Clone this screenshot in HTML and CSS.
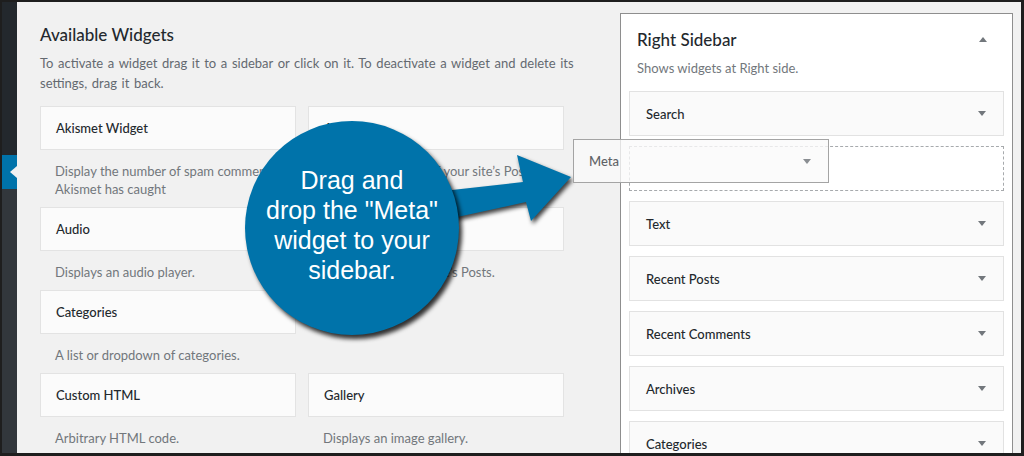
FILE: index.html
```html
<!DOCTYPE html>
<html lang="en">
<head>
<meta charset="utf-8">
<title>Widgets</title>
<link rel="stylesheet" href="styles.css">
</head>
<body>
<div class="frame">
  <nav class="adminmenu">
    <div class="menu-top"></div>
    <div class="menu-current"><span class="menu-pointer"></span></div>
    <div class="menu-sub"></div>
  </nav>

  <main class="content">
    <section class="available">
      <h2 class="available-title">Available Widgets</h2>
      <p class="available-desc">To activate a widget drag it to a sidebar or click on it. To deactivate a widget and delete its<br>settings, drag it back.</p>
      <div class="widget-grid">
        <div class="widget">
          <div class="widget-top">Akismet Widget</div>
          <p class="widget-desc">Display the number of spam comments Akismet has caught</p>
        </div>
        <div class="widget">
          <div class="widget-top">Archives</div>
          <p class="widget-desc">A monthly archive of your site’s Posts.</p>
        </div>
        <div class="widget">
          <div class="widget-top">Audio</div>
          <p class="widget-desc">Displays an audio player.</p>
        </div>
        <div class="widget">
          <div class="widget-top">Calendar</div>
          <p class="widget-desc">A calendar of your site’s Posts.</p>
        </div>
        <div class="widget">
          <div class="widget-top">Categories</div>
          <p class="widget-desc">A list or dropdown of categories.</p>
        </div>
        <div class="widget widget-empty"></div>
        <div class="widget">
          <div class="widget-top">Custom HTML</div>
          <p class="widget-desc">Arbitrary HTML code.</p>
        </div>
        <div class="widget">
          <div class="widget-top">Gallery</div>
          <p class="widget-desc">Displays an image gallery.</p>
        </div>
      </div>
    </section>

    <section class="sidebar-panel">
      <div class="panel-head">
        <h3 class="panel-title">Right Sidebar</h3>
        <span class="tri tri-up"></span>
      </div>
      <p class="panel-desc">Shows widgets at Right side.</p>
      <div class="panel-widgets">
        <div class="side-widget"><span>Search</span><span class="tri tri-down"></span></div>
        <div class="side-placeholder"></div>
        <div class="side-widget"><span>Text</span><span class="tri tri-down"></span></div>
        <div class="side-widget"><span>Recent Posts</span><span class="tri tri-down"></span></div>
        <div class="side-widget"><span>Recent Comments</span><span class="tri tri-down"></span></div>
        <div class="side-widget"><span>Archives</span><span class="tri tri-down"></span></div>
        <div class="side-widget"><span>Categories</span><span class="tri tri-down"></span></div>
      </div>
    </section>
  </main>

  <svg class="callout-arrow" viewBox="430 152 150 80" width="150" height="80" aria-hidden="true">
    <polygon points="425,193 523,182 517,155 571,177 531,221 526,202 425,224" fill="#0073aa"/>
  </svg>

  <div class="callout">
    <p class="callout-text">Drag and<br>drop the "Meta"<br>widget to your<br>sidebar.</p>
  </div>

  <div class="drag-helper"><span>Meta</span><span class="tri tri-down"></span></div>
</div>
</body>
</html>
```

FILE: styles.css
```css
* { box-sizing: border-box; }

html, body {
  margin: 0;
  padding: 0;
}

body {
  width: 1024px;
  height: 456px;
  overflow: hidden;
  background: #1e1e1e;
  font-family: Lato, "Open Sans", sans-serif;
  font-size: 13px;
  color: #23282d;
}

.frame {
  position: relative;
  width: 1024px;
  height: 456px;
  display: flex;
  overflow: hidden;
  border-style: solid;
  border-color: #1e1e1e;
  border-width: 2px 3px 3px 2px;
}

/* admin menu strip */
.adminmenu {
  width: 15px;
  flex: none;
  display: flex;
  flex-direction: column;
}
.menu-top { height: 153px; background: #23282d; }
.menu-current {
  height: 34px;
  background: #0073aa;
  display: flex;
  align-items: center;
  justify-content: flex-end;
}
.menu-pointer {
  width: 0;
  height: 0;
  border-top: 6px solid transparent;
  border-bottom: 6px solid transparent;
  border-right: 7px solid #f1f1f1;
}
.menu-sub { flex: 1; background: #32373c; }

/* main content */
.content {
  flex: 1;
  display: flex;
  background: #f1f1f1;
  overflow: hidden;
}

.available {
  padding: 23px 0 0 23px;
  width: 547px;
  flex: none;
}
.available-title {
  margin: 0;
  font-size: 17px;
  line-height: 20px;
  font-weight: 500;
  color: #23282d;
}
.available-desc {
  margin: 8px 0 0;
  line-height: 20px;
  color: #646970;
  white-space: nowrap;
  word-spacing: 1.3px;
}

.widget-grid {
  margin-top: 13px;
  display: grid;
  grid-template-columns: 256px 256px;
  column-gap: 12px;
}
.widget-top {
  height: 44px;
  display: flex;
  align-items: center;
  padding: 0 15px;
  background: #fbfbfb;
  border: 1px solid #e3e3e3;
  font-weight: 500;
  color: #23282d;
}
.widget-desc {
  margin: 12px 0 9px;
  padding: 0 15px;
  line-height: 18px;
  color: #72777c;
}

/* right sidebar panel */
.sidebar-panel {
  width: 393px;
  flex: none;
  margin: 11px 8px 0 auto;
  background: #fff;
  border: 1px solid #8e8e8e;
  border-bottom: none;
  padding: 15px 8px 0;
  align-self: stretch;
}
.panel-head {
  display: flex;
  align-items: center;
  justify-content: space-between;
  padding: 0 17px 0 8px;
}
.panel-title {
  margin: 0;
  font-size: 17px;
  line-height: 22px;
  font-weight: 500;
  color: #23282d;
}
.panel-desc {
  margin: 8px 0 0 8px;
  line-height: 18px;
  color: #72777c;
}
.panel-widgets {
  margin-top: 14px;
  display: flex;
  flex-direction: column;
  gap: 10px;
}
.side-widget {
  height: 45px;
  flex: none;
  display: flex;
  align-items: center;
  justify-content: space-between;
  padding: 0 17px 0 16px;
  background: #fafafa;
  border: 1px solid #e2e2e2;
  font-weight: 500;
  color: #23282d;
}
.side-placeholder {
  height: 45px;
  flex: none;
  border: 1px dashed #a7aaad;
}

.tri {
  width: 0;
  height: 0;
  border-left: 4px solid transparent;
  border-right: 4px solid transparent;
}
.tri-down { border-top: 5px solid #72777c; }
.tri-up { border-bottom: 5px solid #72777c; margin-bottom: 2px; }

/* overlays */
.callout-arrow {
  position: absolute;
  left: 428px;
  top: 150px;
  overflow: visible;
  filter: drop-shadow(2px 3px 2px rgba(0, 0, 0, 0.75));
}

.callout {
  position: absolute;
  left: 243px;
  top: 119px;
  width: 214px;
  height: 214px;
  border-radius: 50%;
  background: #0073aa;
  box-shadow: 3px 4px 4px rgba(0, 0, 0, 0.8);
  display: flex;
  align-items: center;
  justify-content: center;
  padding-bottom: 6px;
}
.callout-text {
  margin: 0;
  font-family: "Liberation Sans", Arial, sans-serif;
  font-size: 25px;
  line-height: 30px;
  color: #fff;
  text-align: center;
}

.drag-helper {
  position: absolute;
  left: 571px;
  top: 137px;
  width: 256px;
  height: 44px;
  display: flex;
  align-items: center;
  justify-content: space-between;
  padding: 0 17px 0 15px;
  background: rgba(250, 250, 250, 0.78);
  border: 1px solid #a4a4a4;
  color: #5f6266;
  font-weight: 500;
}
.drag-helper .tri-down { border-top-color: #8a8e92; }
```
